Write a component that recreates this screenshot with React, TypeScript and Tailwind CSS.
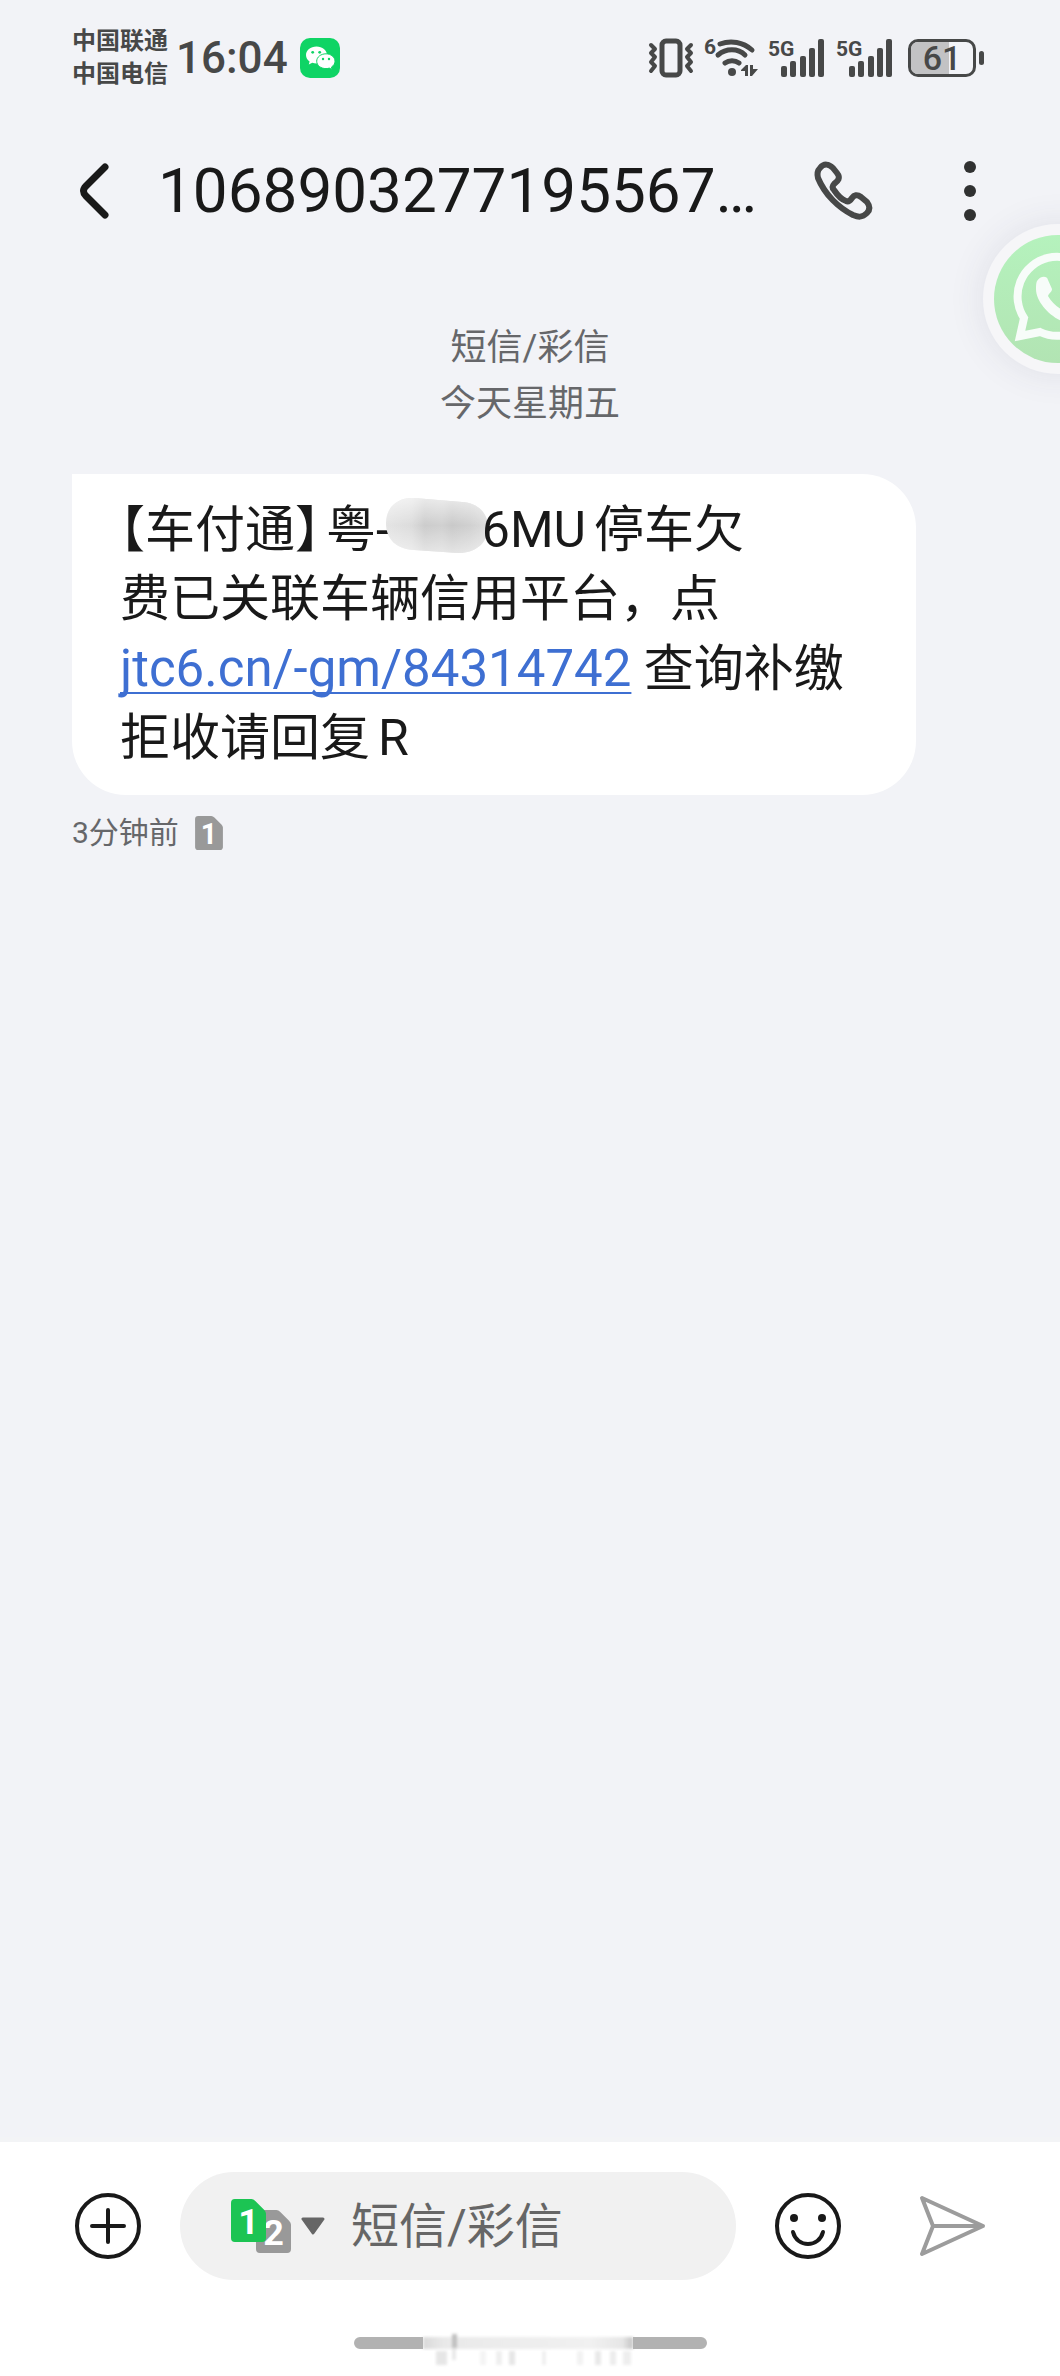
import { ReactNode } from "react";

const carriers = ["中国联通", "中国电信"];

export default function App() {
  return (
    <div className="relative flex min-h-screen flex-col overflow-hidden bg-[#f2f3f7] font-[Roboto,'Noto_Sans_CJK_SC',sans-serif] text-[#191919]">
      <StatusBar />
      <Header />
      <FloatingBubble />
      <main className="flex flex-1 flex-col px-[72px] pt-[53px]">
        <div className="text-center text-[36px] leading-[56px] text-[#66676a]">
          <p>短信/彩信</p>
          <p>今天星期五</p>
        </div>
        <Message />
        <div className="mt-4 flex items-center gap-4 text-[30px] leading-[44px] text-[#66676a]">
          <span>3分钟前</span>
          <SimIcon label="1" className="h-[34px] w-[28px]" fill="#999999" />
        </div>
      </main>
      <Composer />
    </div>
  );
}

function StatusBar() {
  return (
    <header className="flex h-[115px] items-center justify-between pr-[76px] pl-[72px] text-[#474848]">
      <div className="flex items-center">
        <div className="text-[24px] leading-[33px] font-bold">
          {carriers.map((name) => (
            <p key={name}>{name}</p>
          ))}
        </div>
        <time className="ml-2 text-[44px] leading-[48px] font-medium">16:04</time>
        <WechatIcon />
      </div>
      <div className="flex items-center">
        <VibrateIcon />
        <WifiIcon />
        <Signal />
        <Signal />
        <Battery level={61} />
      </div>
    </header>
  );
}

function Header() {
  return (
    <nav className="flex h-[152px] items-center pr-[72px] pl-[72px]">
      <IconButton label="返回">
        <svg viewBox="0 0 44 66" className="h-[66px] w-[44px]" fill="none" stroke="#191919" strokeWidth="7" strokeLinecap="round" strokeLinejoin="round">
          <path d="M33 9 L14 28 Q9 33 14 38 L33 57" />
        </svg>
      </IconButton>
      <h1 className="ml-[42px] flex-1 text-[62px] leading-[72px]">1068903277195567…</h1>
      <IconButton label="拨打电话">
        <svg viewBox="0 0 66 66" className="h-[66px] w-[66px]" fill="none" stroke="#474848" strokeWidth="6" strokeLinejoin="round">
          <path d="M10 10 C14 5 19 6 23 10 L27 15 C31 20 28 23 24 26 C22 28 22 30 24 32 C28 38 33 42 36 43 C38 44 40 43 42 40 C44 37 47 36 51 39 L57 44 C60 48 60 52 57 55 C52 60 48 59 43 57 C29 50 15 37 8 20 C7 16 7 13 10 10 Z" />
        </svg>
      </IconButton>
      <IconButton label="更多">
        <svg viewBox="0 0 36 66" className="ml-[76px] h-[66px] w-[36px]" fill="#303131">
          <circle cx="18" cy="9" r="6" />
          <circle cx="18" cy="33" r="6" />
          <circle cx="18" cy="57" r="6" />
        </svg>
      </IconButton>
    </nav>
  );
}

function IconButton({ label, children }: { label: string; children: ReactNode }) {
  return (
    <button type="button" aria-label={label} className="shrink-0">
      {children}
    </button>
  );
}

function FloatingBubble() {
  return (
    <button
      type="button"
      aria-label="WhatsApp"
      className="absolute top-56 -right-[73px] flex size-[150px] items-center justify-center rounded-full bg-[#f6f6f8] shadow-[0_0_36px_rgba(60,60,90,0.10)]"
    >
      <svg viewBox="0 0 128 128" className="size-[128px]">
        <defs>
          <linearGradient id="wa" x1="0" y1="0" x2="0" y2="1">
            <stop offset="0" stopColor="#b5f2bd" />
            <stop offset="1" stopColor="#b2e4b3" />
          </linearGradient>
        </defs>
        <circle cx="64" cy="64" r="64" fill="url(#wa)" />
        <path
          d="M26 101 L30 83 A39.500 39.500 0 1 1 46 97 Z"
          fill="none"
          stroke="#f7fcf9"
          strokeWidth="8"
        />
        <path
          d="M43 46 C46 41 53 40 54 45 L58 54 C58 57 55 58 54 61 C58 68 64 73 71 76 C74 74 76 71 78 71 L88 76 C90 80 86 87 80 88 C64 90 42 70 42 54 C42 51 42 48 43 46 Z"
          fill="#f7fcf9"
        />
      </svg>
    </button>
  );
}

function Message() {
  return (
    <article className="mt-[42px] w-[844px] max-w-full rounded-[54px] rounded-tl-none bg-white px-12 py-[22px] text-[50px] leading-[69px]">
      <p>
        <span className="[font-feature-settings:'halt']">【</span>车付通
        <span className="mr-1.5 [font-feature-settings:'halt']">】</span>粤-
        <Redacted />
        <span className="mr-2">6MU</span>停车欠
      </p>
      <p>费已关联车辆信用平台，点</p>
      <p>
        <a href="#" className="text-[51px] text-[#3e6fd2] underline decoration-2 underline-offset-[6px] [text-decoration-skip-ink:none]">
          jtc6.cn/-gm/84314742
        </a>{" "}
        查询补缴
      </p>
      <p>
        拒收请回复<span className="ml-2">R</span>
      </p>
    </article>
  );
}

// blurred-out part of the plate number
function Redacted() {
  return (
    <svg viewBox="0 0 102 58" className="-mr-1.5 -ml-1 inline-block h-[58px] w-[102px] align-[-8px]">
      <defs>
        <linearGradient id="smear">
          <stop offset="0" stopColor="#e4e4e4" />
          <stop offset="0.25" stopColor="#dcdcdc" />
          <stop offset="0.38" stopColor="#cccccc" />
          <stop offset="0.55" stopColor="#d0d0d0" />
          <stop offset="0.65" stopColor="#c9c9c9" />
          <stop offset="0.82" stopColor="#d0d0d0" />
          <stop offset="1" stopColor="#dddddd" />
        </linearGradient>
        <linearGradient id="sheen" x1="0" y1="0" x2="0" y2="1">
          <stop offset="0" stopColor="#fff" stopOpacity="0.6" />
          <stop offset="0.5" stopColor="#fff" stopOpacity="0" />
          <stop offset="1" stopColor="#fff" stopOpacity="0.5" />
        </linearGradient>
      </defs>
      {["url(#smear)", "url(#sheen)"].map((fill) => (
        <path key={fill} d="M28 1 L76 5 C92 6 102 16 102 30 C102 46 90 56 72 56 L28 53 C10 52 0 42 0 26 C0 10 12 0 28 1 Z" fill={fill} />
      ))}
    </svg>
  );
}

function SimIcon({ label, fill, className }: { label: string; fill: string; className: string }) {
  return (
    <svg viewBox="0 0 36 44" className={className}>
      <path d="M4 0 H21 Q23 0 25 2 L34 11 Q36 13 36 15 V40 Q36 44 32 44 H4 Q0 44 0 40 V4 Q0 0 4 0 Z" fill={fill} />
      <text x="18" y="36" textAnchor="middle" fontSize="37" fontWeight="700" fill="#fff">
        {label}
      </text>
    </svg>
  );
}

function Composer() {
  return (
    <footer className="border-t-[5px] border-[#f3f4f6] bg-white">
      <form className="flex items-center pt-[30px] pr-[72px] pl-[72px]">
        <IconButton label="添加">
          <svg viewBox="0 0 72 72" className="size-[72px]" fill="none" stroke="#191919" strokeWidth="4" strokeLinecap="round">
            <circle cx="36" cy="36" r="31" />
            <path d="M20 36 H52 M36 20 V52" />
          </svg>
        </IconButton>
        <div className="ml-9 flex h-[108px] min-w-0 flex-1 items-center rounded-full bg-[#f1f1f1] pl-[51px]">
          <button type="button" aria-label="选择SIM卡" className="flex shrink-0 items-center">
            <span className="relative h-[54px] w-[60px]">
              <SimIcon label="2" className="absolute right-0 bottom-0 h-[43px] w-[35px]" fill="#999999" />
              <SimIcon label="1" className="absolute top-0 left-0 h-[43px] w-[35px]" fill="#1cc453" />
            </span>
            <svg viewBox="0 0 24 18" className="ml-[10px] h-[18px] w-6" fill="#666" stroke="#666" strokeWidth="3" strokeLinejoin="round">
              <path d="M2 2 H22 L12 16 Z" />
            </svg>
          </button>
          <input
            type="text"
            aria-label="短信内容"
            placeholder="短信/彩信"
            className="ml-[26px] min-w-0 flex-1 bg-transparent pt-0.5 text-[48px] leading-[72px] outline-none placeholder:text-[#666666]"
          />
        </div>
        <IconButton label="表情">
          <svg viewBox="0 0 72 72" className="ml-9 size-[72px]" fill="none" stroke="#191919" strokeWidth="4" strokeLinecap="round">
            <circle cx="36" cy="36" r="31" />
            <path d="M21 42 C25 58 47 58 51 42" />
            <circle cx="22" cy="28" r="4" fill="#191919" stroke="none" />
            <circle cx="50" cy="28" r="4" fill="#191919" stroke="none" />
          </svg>
        </IconButton>
        <IconButton label="发送">
          <svg viewBox="0 0 72 72" className="ml-[72px] size-[72px]" fill="none" stroke="#9c9c9c" strokeWidth="4" strokeLinecap="round" strokeLinejoin="round">
            <path d="M6 8 L67 36 L6 64 L17 36 Z M17 36 H67" />
          </svg>
        </IconButton>
      </form>
      <HomeIndicator />
    </footer>
  );
}

const smudges = [
  { x: 82, w: 11, color: "#e6e6e6" },
  { x: 126, w: 6, color: "#f4f4f4" },
  { x: 142, w: 6, color: "#efefef" },
  { x: 155, w: 6, color: "#e6e6e6" },
  { x: 188, w: 4, color: "#efefef" },
  { x: 223, w: 6, color: "#f2f2f2" },
  { x: 241, w: 6, color: "#e8e8e8" },
  { x: 256, w: 6, color: "#ececec" },
  { x: 269, w: 8, color: "#eeeeee" },
];

function HomeIndicator() {
  return (
    <div className="flex justify-center pt-[51px] pb-[5px]">
      <svg viewBox="0 0 353 40" className="h-10 w-[353px]">
        <defs>
          <linearGradient id="fade">
            <stop offset="0" stopColor="#dadada" />
            <stop offset="0.1" stopColor="#e9e9e9" />
            <stop offset="0.8" stopColor="#f1f1f1" />
            <stop offset="0.95" stopColor="#e6e6e6" />
            <stop offset="1" stopColor="#c4c4c4" />
          </linearGradient>
          <filter id="soft">
            <feGaussianBlur stdDeviation="1.500" />
          </filter>
        </defs>
        <rect x="69" y="6" width="210" height="12" fill="url(#fade)" filter="url(#soft)" />
        <g filter="url(#soft)">
          <rect x="98" y="3" width="5" height="14" fill="#c0c0c0" />
          <rect x="98" y="17" width="4" height="12" fill="#e8e8e8" />
          {smudges.map((s) => (
            <rect key={s.x} x={s.x} y="20" width={s.w} height="14" fill={s.color} />
          ))}
        </g>
        <path d="M6 6 H69 V18 H6 A6 6 0 0 1 6 6 Z M279 6 H347 A6 6 0 0 1 347 18 H279 Z" fill="#b2b2b2" />
      </svg>
    </div>
  );
}

function WechatIcon() {
  return (
    <svg viewBox="0 0 40 40" className="ml-[12px] size-10">
      <rect width="40" height="40" rx="10" fill="#0fd465" />
      <path d="M16.500 8.500 C10.500 8.500 6 12.200 6 17 C6 19.700 7.400 22 9.600 23.500 L8.800 26.500 L12.300 24.800 C13.600 25.200 15 25.500 16.500 25.500 C22.300 25.500 27 21.700 27 17 C27 12.200 22.300 8.500 16.500 8.500 Z" fill="#fff" />
      <path d="M26 15.800 C20.800 15.800 16.700 19.100 16.700 23.200 C16.700 27.400 20.800 30.600 26 30.600 C27.200 30.600 28.300 30.400 29.300 30.100 L32 31.500 L31.500 29 C33.700 27.700 35 25.500 35 23.200 C35 19.100 31 15.800 26 15.800 Z" fill="#fff" stroke="#0fd465" strokeWidth="1" />
      <g fill="#0fd465">
        <circle cx="12.700" cy="14.300" r="1.400" />
        <circle cx="19.700" cy="14.300" r="1.400" />
        <circle cx="23" cy="21" r="1.200" />
        <circle cx="29" cy="21" r="1.200" />
      </g>
    </svg>
  );
}

function VibrateIcon() {
  return (
    <svg viewBox="0 0 46 40" className="h-10 w-[46px]" fill="none" stroke="#474848" strokeLinecap="round" strokeLinejoin="round">
      <rect x="14" y="3" width="18" height="34" rx="4" strokeWidth="5" />
      <path d="M3 7 L7 11 L3 15 L7 19 L3 24 L7 28 L3 33" strokeWidth="4" />
      <path d="M43 7 L39 11 L43 15 L39 19 L43 24 L39 28 L43 33" strokeWidth="4" />
    </svg>
  );
}

function WifiIcon() {
  return (
    <svg viewBox="0 0 54 48" className="ml-[10px] h-12 w-[54px]" fill="none" stroke="#474848" strokeWidth="5">
      <text x="0" y="20" fontSize="21" fontWeight="700" fill="#474848" stroke="none">6</text>
      <g strokeLinecap="round">
        <path d="M16 10 C27 6 39 8 48 16" />
        <path d="M14 21 C22 14 34 14 41 21" />
        <path d="M21 29 C25 26 31 26 35 29" />
      </g>
      <circle cx="28" cy="38" r="4" fill="#474848" stroke="none" />
      <path d="M37 36 L42 31 H44 V42 H41 V37 H37 Z M46 31 H49 V35 H54 L48 42 H46 Z" fill="#474848" stroke="none" />
    </svg>
  );
}

function Signal() {
  return (
    <svg viewBox="0 0 58 48" className="ml-[10px] h-12 w-[58px]" fill="#474848">
      <text x="0" y="22" fontSize="21" fontWeight="700">5G</text>
      <rect x="13" y="32" width="6" height="11" rx="2" />
      <rect x="22" y="27" width="6" height="16" rx="2" />
      <rect x="32" y="22" width="6" height="21" rx="2" />
      <rect x="41" y="14" width="6" height="29" rx="2" />
      <rect x="50" y="5" width="6" height="38" rx="2" />
    </svg>
  );
}

function Battery({ level }: { level: number }) {
  return (
    <div className="ml-[14px] flex items-center gap-[3px]">
      <div className="relative h-[38px] w-[68px] overflow-hidden rounded-[10px] border-[3px] border-[#474848]">
        <div className="absolute inset-y-0 left-0 bg-[#c2c2c4]" style={{ width: `${level}%` }} />
        <span className="relative block text-center text-[34px] leading-[32px] font-medium">{level}</span>
      </div>
      <div className="h-[14px] w-[5px] rounded-full bg-[#474848]" />
    </div>
  );
}
